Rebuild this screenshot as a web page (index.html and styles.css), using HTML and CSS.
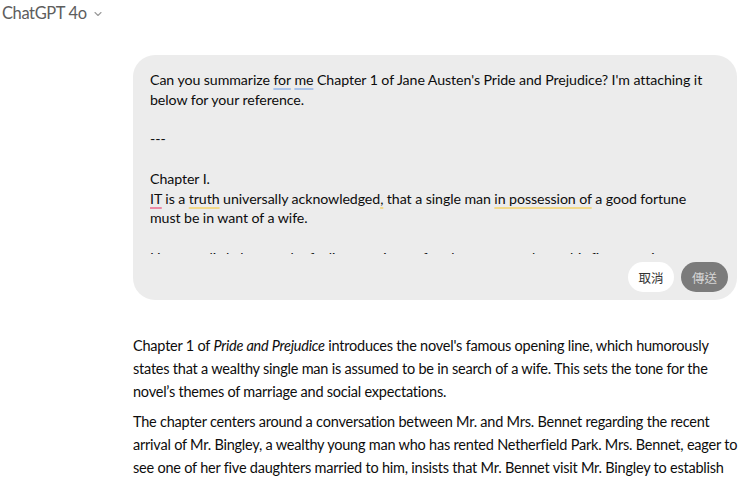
FILE: index.html
```html
<!DOCTYPE html>
<html>
<head>
<meta charset="utf-8">
<link rel="stylesheet" href="styles.css">
</head>
<body>
<header class="topbar">
  <span class="model">ChatGPT 4o</span>
  <svg class="chev" width="10" height="10" viewBox="0 0 10 10"><path d="M2 3.5 L5 6.5 L8 3.5" fill="none" stroke="#9a9a9a" stroke-width="1.1" stroke-linecap="round" stroke-linejoin="round"/></svg>
</header>
<main class="chat">
  <section class="bubble">
    <div class="editor">
      <p class="ln">Can you summarize <span class="ul blue">for</span> <span class="ul blue">me</span> Chapter 1 of Jane Austen's Pride and Prejudice? I'm attaching it below for your reference.</p>
      <p class="ln">&nbsp;</p>
      <p class="ln">---</p>
      <p class="ln">&nbsp;</p>
      <p class="ln">Chapter I.</p>
      <p class="ln"><span class="ul red">IT</span> is a <span class="ul yellow">truth</span> universally acknowledged<span class="ul yellow">,</span> that a single man <span class="ul yellow">in possession of</span> a good fortune must be in want of a wife.</p>
      <p class="ln">&nbsp;</p>
      <p class="ln">However little known the feelings or views of such a man may be on his first entering a neighbourhood</p>
    </div>
    <div class="actions">
      <button class="btn cancel">取消</button>
      <button class="btn send">傳送</button>
    </div>
  </section>
  <article class="reply">
    <p>Chapter 1 of <em>Pride and Prejudice</em> introduces the novel's famous opening line, which humorously states that a wealthy single man is assumed to be in search of a wife. This sets the tone for the novel’s themes of marriage and social expectations.</p>
    <p>The chapter centers around a conversation between Mr. and Mrs. Bennet regarding the recent arrival of Mr. Bingley, a wealthy young man who has rented Netherfield Park. Mrs. Bennet, eager to see one of her five daughters married to him, insists that Mr. Bennet visit Mr. Bingley to establish <span class="nowrap">a connection.</span></p>
  </article>
</main>
</body>
</html>
```

FILE: styles.css
```css
* { box-sizing: border-box; }
html, body { margin: 0; padding: 0; background: #ffffff; }
body {
  font-family: "Lato", "Noto Sans", "Noto Sans CJK TC", sans-serif;
  color: #0d0d0d;
  overflow: hidden;
  height: 477px;
}
.topbar {
  display: flex;
  align-items: center;
  gap: 6px;
  height: 26px;
  padding-left: 2px;
}
.model {
  font-size: 16.5px;
  letter-spacing: -0.4px;
  color: #5d5d5d;
}
.chev { margin-top: 1px; }
.chat {
  padding: 29px 3px 0 133px;
}
.bubble {
  background: #ececec;
  border-radius: 22px;
  padding: 15px 9px 8px 17px;
}
.editor {
  height: 184px;
  overflow: hidden;
  padding-right: 20px;
}
.ln {
  margin: 0;
  font-size: 14.2px;
  letter-spacing: -0.08px;
  line-height: 19.75px;
  color: #0d0d0d;
}
.ul {
  text-decoration-line: underline;
  text-decoration-thickness: 2px;
  text-underline-offset: 3px;
}
.blue { text-decoration-color: #a9c3ea; }
.red { text-decoration-color: #ec8aa6; }
.yellow { text-decoration-color: #f2d98a; }
.actions {
  display: flex;
  justify-content: flex-end;
  gap: 7px;
  margin-top: 8px;
}
.btn {
  border: none;
  height: 30px;
  width: 46px;
  border-radius: 15px;
  font-family: "Noto Sans CJK TC", sans-serif;
  font-size: 12.5px;
  padding: 0;
}
.cancel { background: #ffffff; color: #333333; }
.send { background: #7b7b7b; color: #d6d6d6; width: 47px; }
.reply {
  margin-top: 34px;
  margin-right: -3px;
}
.reply p {
  margin: 0 0 7px;
  font-size: 14.5px;
  letter-spacing: -0.22px;
  line-height: 23px;
  color: #0d0d0d;
}
.nowrap { white-space: nowrap; }
```
